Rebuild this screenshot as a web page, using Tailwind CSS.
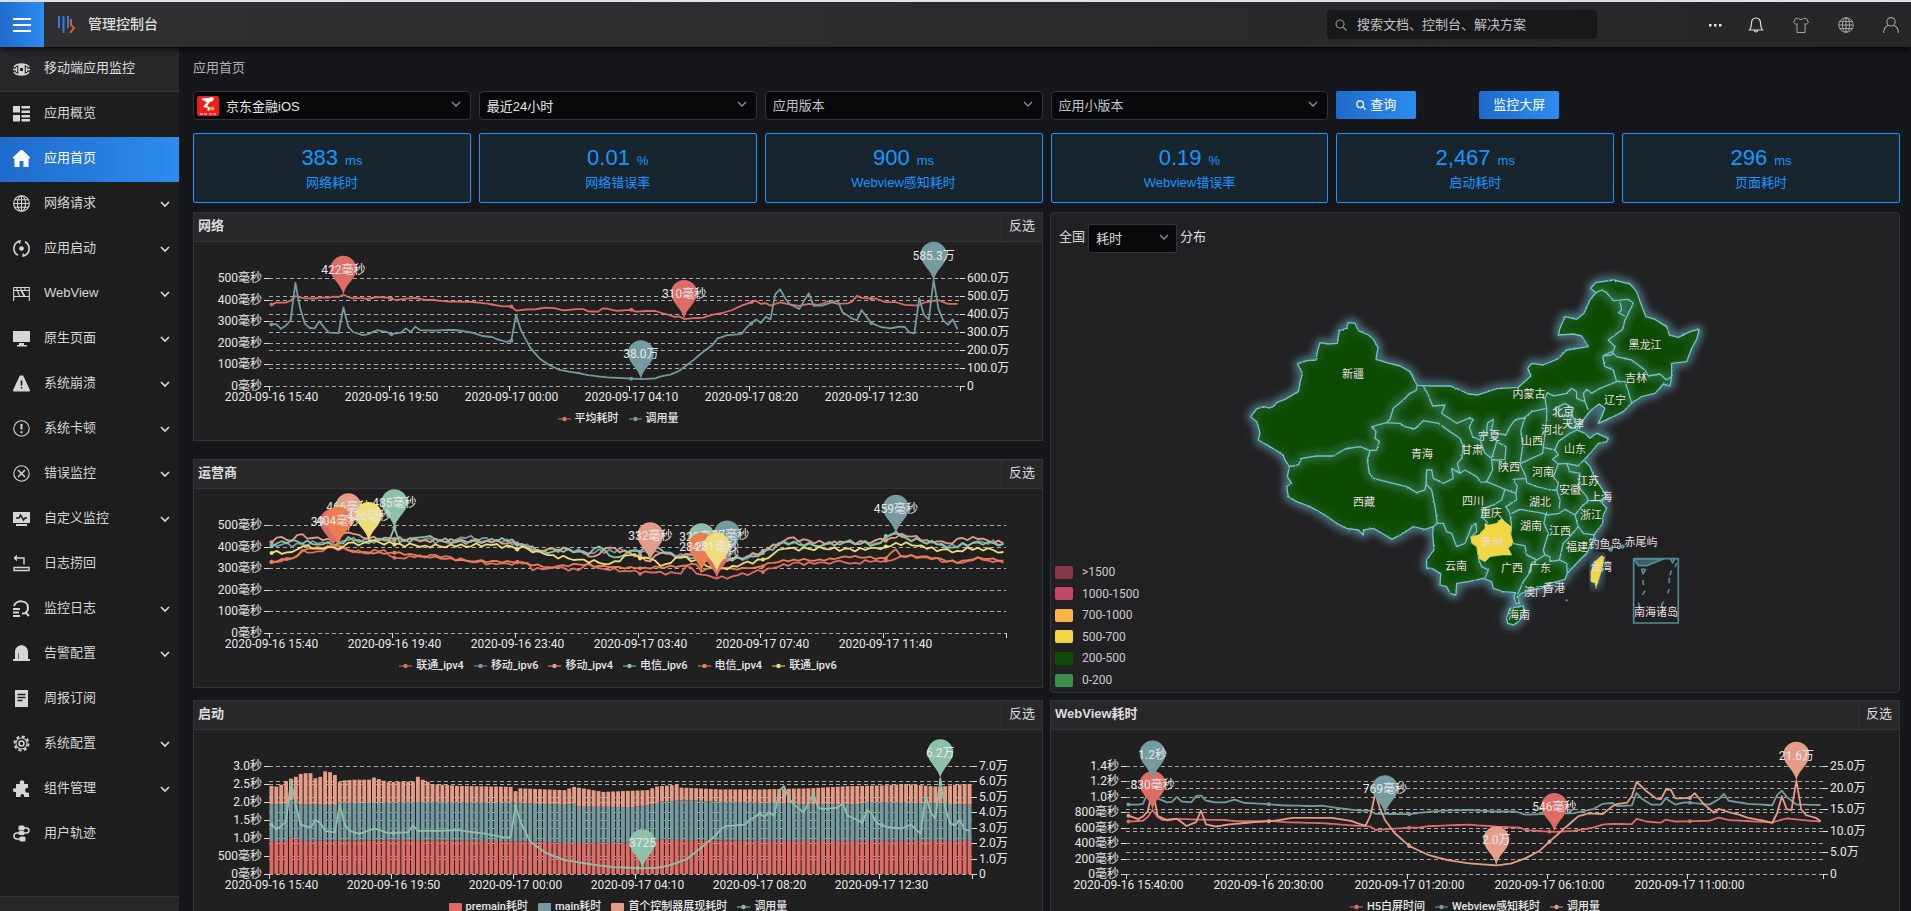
<!DOCTYPE html>
<html lang="zh-CN">
<head>
    <meta charset="UTF-8">
    <meta name="viewport" content="width=device-width, initial-scale=1.0">
    <script src="https://cdn.jsdelivr.net/npm/@tailwindcss/browser@4"></script>
    <title>管理控制台</title>
</head>
<body class="h-screen flex flex-col overflow-hidden bg-[#16171a] border-t-2 border-[#dfe1e5] text-[13px] text-[#dcdcdc] font-['Liberation_Sans','Noto_Sans_CJK_SC',sans-serif]">
    <!-- Header -->
    <header class="relative z-10 h-[45px] shrink-0 flex items-center bg-gradient-to-r from-[#303032] to-[#262628] shadow-md shadow-black/60">
        <button type="button" aria-label="菜单" class="w-11 h-full flex items-center justify-center bg-gradient-to-r from-[#1f6bcb] to-[#2d8cf0]">
            <svg class="w-5 h-4" viewBox="0 0 20 16" fill="none" stroke="#fff" stroke-width="2"><path d="M1 2h18M1 8h18M1 14h18"/></svg>
        </button>
        <svg class="ml-3 w-5 h-5" viewBox="0 0 20 20" fill="none" stroke-width="2"><path stroke="#2d7fdc" d="M3 1v12M7.500 1v17M12 1v12"/><path stroke="#e2582e" d="M15 4v6l3 3-4 5"/></svg>
        <h1 class="ml-3 pb-0.5 text-sm font-medium">管理控制台</h1>
        <label class="ml-auto w-[270px] h-[29px] flex items-center gap-2.5 px-2 rounded-sm bg-[#17181a]">
            <svg class="w-3 h-3" viewBox="0 0 12 12" fill="none" stroke="#8b8b8b" stroke-width="1.2"><circle cx="5" cy="5" r="4"/><path d="M8 8l3.500 3.500"/></svg>
            <input type="text" aria-label="搜索" placeholder="搜索文档、控制台、解决方案" class="flex-1 bg-transparent outline-none placeholder:text-[#c2c2c2]">
        </label>
        <nav class="ml-[110px] mr-3 flex items-center gap-[29px]">
            <button type="button" aria-label="更多" class="-mr-1"><svg class="w-4 h-4" viewBox="0 0 16 16" fill="#e3e3e3"><path d="M2 7h2.500v2.500H2zM7 7h2.500v2.500H7zM12 7h2.500v2.500H12z"/></svg></button>
            <button type="button" aria-label="通知"><svg class="w-4 h-4" viewBox="0 0 16 16" fill="none" stroke="#e0e0e0" stroke-width="1.200"><path d="M8 1c-3 0-4.500 2.200-4.500 5 0 4-.5 5-2 7h13c-1.500-2-2-3-2-7C12.500 3.200 11 1 8 1zM6.500 13.500c0 2 3 2 3 0"/></svg></button>
            <button type="button" aria-label="主题"><svg class="w-4 h-4" viewBox="0 0 16 16" fill="none" stroke="#a3a3a3" stroke-width="1"><path d="M5 1C6 3 10 3 11 1l2.500.8L15.500 5.500 13 7.500l-1-1V15.500H4V6.500l-1 1L.5 5.500l2-3.700z"/></svg></button>
            <button type="button" aria-label="语言"><svg class="w-4 h-4" viewBox="0 0 16 16" fill="none" stroke="#a3a3a3" stroke-width="1"><circle cx="8" cy="8" r="7.300"/><ellipse cx="8" cy="8" rx="3.600" ry="7.300"/><path d="M8 .7v14.600M.7 8h14.600M1.700 4.500h12.600M1.700 11.500h12.600"/></svg></button>
            <button type="button" aria-label="用户"><svg class="w-4 h-4" viewBox="0 0 16 16" fill="none" stroke="#a3a3a3" stroke-width="1.100"><circle cx="8" cy="4.800" r="4.200"/><path d="M.6 16c0-4 2-6.500 4.600-7.400M15.400 16c0-4-2-6.500-4.600-7.400"/></svg></button>
        </nav>
    </header>

    <div class="flex-1 min-h-0 flex">
        <!-- Sidebar -->
        <aside class="w-[179px] shrink-0 flex flex-col bg-[#1d1d1e]">
            <div class="h-[45px] shrink-0 flex items-center gap-3.5 px-[13px] bg-[#28282a] border-b border-[#38383a]">
                <svg class="w-[17px] h-[17px]" viewBox="0 0 17 17" fill="none" stroke="#d6d6d6" stroke-width="1.400"><path d="M1 6c3-4 12-4 15 0M1 11c3 4 12 4 15 0M0 8.500h3M14 8.500h3"/><path fill="#d6d6d6" d="M6 4h5v9H6zM3.500 6v5M13.500 6v5"/><circle cx="8.500" cy="8.500" r="1" fill="#222" stroke="#222"/></svg>
                <span class="pb-0.5">移动端应用监控</span>
            </div>
            <nav id="menu" class="flex-1 flex flex-col"></nav>
            <div class="h-[15px] bg-[#28282a] border-t border-[#38383a]"></div>
        </aside>

        <!-- Content -->
        <main class="flex-1 min-w-0 overflow-y-auto [scrollbar-width:none] pl-3.5 pr-[11px]">
            <div class="h-11 pb-0.5 flex items-center text-[#b2b2b2]">应用首页</div>

            <!-- Filters -->
            <form class="grid grid-cols-6 gap-2">
                <div class="relative">
                    <svg class="absolute left-1 top-[5px] w-[22px] h-5" viewBox="0 0 22 20"><rect width="22" height="20" rx="2" fill="#f01d1d"/><path fill="#fff" d="M4 3c3-2 7 0 10-2l3 1-1 3-3 1-3 4 4 2-2 3-2-1 1-2-5-1 4-5-3-1z"/><circle cx="15.500" cy="12.500" r="2" fill="#ffb52e"/><path stroke="#fff" d="M3 18h3M7 18h3M12 18h3M16 18h3"/></svg>
                    <select aria-label="应用" class="w-full h-[29px] pl-8 pt-0.5 rounded-sm border border-[#333436] bg-[#09090b] text-[#e6e6e6] appearance-none outline-none"><option>京东金融iOS</option></select>
                    <svg class="absolute right-2.5 top-2.5 w-2.5 h-2" viewBox="0 0 10 8" fill="none" stroke="#8d9199" stroke-width="1.300"><path d="M1 1l4 4 4-4"/></svg>
                </div>
                <div class="relative">
                    <select aria-label="时间" class="w-full h-[29px] pl-[7px] pt-0.5 rounded-sm border border-[#333436] bg-[#09090b] text-[#e6e6e6] appearance-none outline-none"><option>最近24小时</option></select>
                    <svg class="absolute right-2.5 top-2.5 w-2.5 h-2" viewBox="0 0 10 8" fill="none" stroke="#8d9199" stroke-width="1.300"><path d="M1 1l4 4 4-4"/></svg>
                </div>
                <div class="relative">
                    <select aria-label="应用版本" class="w-full h-[29px] pl-[7px] rounded-sm border border-[#333436] bg-[#09090b] text-[#bfc3c9] appearance-none outline-none"><option>应用版本</option></select>
                    <svg class="absolute right-2.5 top-2.5 w-2.5 h-2" viewBox="0 0 10 8" fill="none" stroke="#8d9199" stroke-width="1.300"><path d="M1 1l4 4 4-4"/></svg>
                </div>
                <div class="relative">
                    <select aria-label="应用小版本" class="w-full h-[29px] pl-[7px] rounded-sm border border-[#333436] bg-[#09090b] text-[#bfc3c9] appearance-none outline-none"><option>应用小版本</option></select>
                    <svg class="absolute right-2.5 top-2.5 w-2.5 h-2" viewBox="0 0 10 8" fill="none" stroke="#8d9199" stroke-width="1.300"><path d="M1 1l4 4 4-4"/></svg>
                </div>
                <div class="flex gap-[63px]">
                    <button type="button" class="w-20 h-7 flex items-center justify-center gap-1 rounded-xs text-white bg-gradient-to-r from-[#1f6bcb] to-[#2d8cf0]">
                        <svg class="w-2.5 h-2.5" viewBox="0 0 12 12" fill="none" stroke="#fff" stroke-width="1.500"><circle cx="5" cy="5" r="4"/><path d="M8 8l3.500 3.500"/></svg>查询
                    </button>
                    <button type="button" class="w-20 h-7 rounded-xs text-white bg-gradient-to-r from-[#1f6bcb] to-[#2d8cf0]">监控大屏</button>
                </div>
            </form>

            <!-- Key figures -->
            <div id="cards" class="mt-[13px] grid grid-cols-6 gap-2"></div>

            <!-- Panels -->
            <div class="mt-[9px] grid grid-cols-2 gap-x-[7px] gap-y-[7px]">
                <div class="flex flex-col gap-[18px]">
                    <section class="h-[229px] flex flex-col border border-[#333435] bg-[#202020]">
                        <div class="h-[29px] shrink-0 flex items-center bg-[#28282a] border-b border-[#333435]">
                            <h2 class="flex-1 pl-1 pb-0.5 font-bold">网络</h2>
                            <button type="button" class="w-[41px] h-full pb-0.5 border-l border-[#333435]">反选</button>
                        </div>
                        <div id="chart-net" class="flex-1"></div>
                    </section>
                    <section class="h-[229px] flex flex-col border border-[#333435] bg-[#202020]">
                        <div class="h-[29px] shrink-0 flex items-center bg-[#28282a] border-b border-[#333435]">
                            <h2 class="flex-1 pl-1 pb-0.5 font-bold">运营商</h2>
                            <button type="button" class="w-[41px] h-full pb-0.5 border-l border-[#333435]">反选</button>
                        </div>
                        <div id="chart-isp" class="flex-1"></div>
                    </section>
                </div>

                <section class="h-[481px] flex flex-col border border-[#333435] rounded bg-[#212123]">
                    <div class="mt-[11px] ml-2 flex items-center gap-[3px]">
                        <label for="metric" class="pb-1">全国</label>
                        <div class="relative">
                            <select id="metric" class="w-[89px] h-[29px] pl-[7px] rounded-xs border border-[#333436] bg-[#09090b] appearance-none outline-none"><option>耗时</option></select>
                            <svg class="absolute right-2 top-2.5 w-2.5 h-2" viewBox="0 0 10 8" fill="none" stroke="#8d9199" stroke-width="1.300"><path d="M1 1l4 4 4-4"/></svg>
                        </div>
                        <span class="pb-1">分布</span>
                    </div>
                    <div class="flex-1 min-h-0 flex items-end">
                        <ul class="w-[96px] shrink-0 ml-1 text-xs font-['Roboto',sans-serif] text-[#ccc] pb-[1px]">
                            <li class="h-[22px] flex items-center gap-[9px]"><i class="w-[18px] h-[13px] rounded-xs bg-[#8a3548]"></i>&gt;1500</li>
                            <li class="h-[21px] flex items-center gap-[9px]"><i class="w-[18px] h-[13px] rounded-xs bg-[#c24866]"></i>1000-1500</li>
                            <li class="h-[22px] flex items-center gap-[9px]"><i class="w-[18px] h-[13px] rounded-xs bg-[#ffb24a]"></i>700-1000</li>
                            <li class="h-[21px] flex items-center gap-[9px]"><i class="w-[18px] h-[13px] rounded-xs bg-[#f2d643]"></i>500-700</li>
                            <li class="h-[22px] flex items-center gap-[9px]"><i class="w-[18px] h-[13px] rounded-xs bg-[#0f4c05]"></i>200-500</li>
                            <li class="h-[22px] flex items-center gap-[9px]"><i class="w-[18px] h-[13px] rounded-xs bg-[#3b8f4a]"></i>0-200</li>
                        </ul>
                        <div class="flex-1 flex justify-center pr-[110px] mb-[52px]">
                            <svg class="w-[480px] h-[380px] overflow-visible" viewBox="0 0 480 380">
                                <defs>
                                    <filter id="blur" x="-10%" y="-10%" width="120%" height="120%"><feGaussianBlur stdDeviation="12"/></filter>
                                    <filter id="rough" x="-5%" y="-5%" width="110%" height="110%"><feTurbulence type="fractalNoise" baseFrequency=".2" numOctaves="2" seed="4"/><feDisplacementMap in="SourceGraphic" scale="6" xChannelSelector="R" yChannelSelector="G"/></filter>
                                    <path id="land" d="M62 470L80 447 100 440 118 444 130 440 140 428 165 418 205 395 212 360 217 340 203 312 230 302 258 300 262 275 270 248 295 252 322 250 328 212 350 205 355 188 375 190 385 212 415 225 430 238 444 262 438 298 470 308 510 318 540 335 555 365 562 376 600 378 660 378 690 390 715 402 745 405 800 386 865 382 903 348 893 325 905 310 940 315 985 296 1010 270 1075 260 1055 228 1030 222 985 225 990 205 1005 170 1040 178 1062 160 1080 120 1098 98 1082 85 1098 68 1150 60 1200 72 1220 95 1232 130 1248 170 1275 178 1310 200 1318 225 1345 232 1380 215 1408 208 1400 238 1385 265 1370 305 1325 310 1325 350 1320 378 1300 372 1275 400 1235 410 1205 430 1180 455 1150 470 1105 490 1115 470 1125 445 1108 432 1090 445 1075 460 1060 480 1045 495 1040 510 1065 520 1080 535 1100 520 1135 535 1130 545 1105 550 1085 575 1062 600 1080 620 1093 650 1108 675 1122 695 1130 710 1110 722 1130 745 1120 765 1118 790 1095 820 1085 850 1070 880 1040 910 1012 940 1005 958 960 970 935 985 900 990 875 1000 862 1010 868 1030 858 1030 852 1010 857 998 820 995 790 985 785 965 760 955 715 965 680 970 678 1005 660 1000 650 980 630 975 632 940 605 925 590 925 590 900 612 870 608 820 610 800 585 808 550 800 520 820 485 838 465 825 430 805 400 810 400 825 385 810 350 805 320 790 285 765 240 740 200 725 175 710 170 680 185 670 172 650 178 620 165 600 160 585 120 560 85 540 90 520 85 500 80 485ZM830 1075L840 1045 880 1038 882 1060 865 1085 850 1095 833 1090Z"/>
                                    <path id="borders" d="M178 620L205 615 215 595 260 588 310 588 345 567 390 560 420 572 440 570 448 545 435 535 438 515 425 500 470 488 480 478 490 445 520 420 540 400 558 392 562 376
                                        M420 572L412 600 418 640 430 655 480 668 530 680 560 698 585 690 588 672 605 690 615 740 622 790 610 800
                                        M470 488L510 490 525 500 555 507 580 482 625 490 660 515 690 535 700 560 695 595 682 610 690 640 665 625 670 655 640 670 610 655 605 630 590 630 588 672
                                        M580 378L595 405 608 438 645 435 635 460 680 490 715 475 730 478 718 500 728 530 750 540 757 520 770 525 772 490 790 478 785 510 800 520 828 525 840 500 855 480 885 472 905 455 950 445 945 415 952 398 970 408 1010 400 1025 385 1040 395 1040 415 1065 425 1060 400 1070 388 1085 400 1110 385 1160 365 1150 330 1125 320 1118 288 1145 285 1155 260 1135 240 1178 208 1185 180 1193 165 1210 130 1195 118 1150 122 1130 98 1115 90 1098 98
                                        M1170 125L1175 150 1165 158 1185 168 M750 540L765 580 785 595 793 570 800 545 828 560 825 598 800 600 785 598 788 630 770 665 825 688 858 700 862 680 850 658 888 655
                                        M885 472L873 510 878 560 870 612 905 595 938 580 940 562 945 520 950 480 950 445 M1065 425L1075 450
                                        M1160 365L1185 365 1195 395 1205 430 M1118 288L1145 275 1160 290 1205 300 1245 330 1255 348 1290 342 1310 360 1325 350
                                        M940 562L975 570 985 545 1020 520 1040 510 M975 570L985 585 968 598 985 612 1010 610 1045 618 1062 600
                                        M975 445L1005 430 1030 445 1025 465 990 470ZM1025 465L1040 490 1035 505 1015 500Z
                                        M870 612L888 650 890 668 920 680 960 690 980 690 985 670 970 650 985 612 M1010 610L1020 635 1050 640 1045 680 1070 710 1075 722
                                        M980 690L990 720 988 745 M690 640L705 630 740 650 755 668 770 665 M825 688L815 720 790 735 760 745 755 770 775 790
                                        M858 700L860 720 828 740 840 760 845 800 M622 790L640 790 650 815 665 820 680 860 705 850 725 800 738 790 740 815 725 830
                                        M845 760L870 748 940 760 950 765 988 760 1005 748 1035 765 1055 740 1075 722 1110 722 M950 755L942 790 955 820 940 870 945 885
                                        M850 850L885 858 890 885 920 900 945 885 960 890 960 905 988 900 1010 910 1012 940 M1035 765L1045 800 1020 830 1000 850 988 900
                                        M1045 800L1060 820 1095 825 M920 900L905 910 895 945 880 965 862 1005 M745 895L755 920 775 930 765 955"/>
                                    <clipPath id="inland"><use href="#land"/></clipPath>
                                </defs>
                                <g transform="scale(.3333)" stroke-linejoin="round">
                                    <use href="#land" fill="none" stroke="#6fb7cc" stroke-width="18" opacity=".8" filter="url(#blur)"/>
                                    <path d="M1083 935L1095 905 1115 887 1122 892 1115 930 1098 985Z" stroke="#6fb7cc" stroke-width="14" opacity=".6" filter="url(#blur)"/>
                                    <g filter="url(#rough)">
                                        <use href="#land" fill="#0f4c05"/>
                                        <g clip-path="url(#inland)" fill="none">
                                            <use href="#land" stroke="#6fb7cc" stroke-width="8" opacity=".3" filter="url(#blur)"/>
                                            <use href="#borders" stroke="#6fb7cc" stroke-width="14" opacity=".55" filter="url(#blur)"/>
                                        </g>
                                        <path fill="#f2d643" stroke="#b9d98c" stroke-width="2" d="M765 790L775 795 800 790 815 775 830 790 845 800 843 825 850 850 835 865 845 885 815 885 780 890 765 905 745 895 740 860 725 850 722 830 745 825 765 805Z"/>
                                        <g fill="none" stroke="#74c2c6" stroke-width="4"><use href="#land"/><use href="#borders"/></g>
                                        <path fill="#f2d643" stroke="#b9d98c" stroke-width="2" d="M1083 935L1095 905 1115 887 1122 892 1115 930 1098 985 1095 968 1083 965Z"/>
                                    </g>
                                    <g fill="#4d93a0" stroke="#5fa3ae" stroke-width="3"><circle cx="1142" cy="868" r="6"/><circle cx="1178" cy="860" r="5"/><circle cx="1010" cy="1021" r="2"/></g>
                                    <g fill="none" stroke="#4f8d98" stroke-width="5">
                                        <path fill="#3d5c66" d="M1212 897L1300 897 1250 917 1225 917Z"/>
                                        <path d="M1211 896h134v193h-134zM1322 897l6 12 6-12M1340 910l-5 12M1324 932l-4 14M1318 953v17M1318 988l-5 12M1300 1025l-8 18M1225 1028l4 14M1246 992l-9 12M1238 960l3 15M1235 928h12l-8 14z"/>
                                    </g>
                                </g>
                                <g id="provinces" class="text-[11px] fill-[#e8dfe2] font-['Noto_Sans_CJK_SC',sans-serif]" text-anchor="middle"></g>
                            </svg>
                        </div>
                    </div>
                </section>

                <section class="h-[229px] flex flex-col border border-[#333435] bg-[#202020]">
                    <div class="h-[29px] shrink-0 flex items-center bg-[#28282a] border-b border-[#333435]">
                        <h2 class="flex-1 pl-1 pb-0.5 font-bold">启动</h2>
                        <button type="button" class="w-[41px] h-full pb-0.5 border-l border-[#333435]">反选</button>
                    </div>
                    <div id="chart-launch" class="flex-1"></div>
                </section>
                <section class="h-[229px] flex flex-col border border-[#333435] bg-[#202020]">
                    <div class="h-[29px] shrink-0 flex items-center bg-[#28282a] border-b border-[#333435]">
                        <h2 class="flex-1 pl-1 pb-0.5 font-bold">WebView耗时</h2>
                        <button type="button" class="w-[41px] h-full pb-0.5 border-l border-[#333435]">反选</button>
                    </div>
                    <div id="chart-webview" class="flex-1"></div>
                </section>
            </div>
        </main>
    </div>

    <script>
        // Sidebar entries: name, has submenu, icon (17x17)
        const menu = [
            ['应用概览', false, '<path fill="currentColor" stroke="none" d="M0 1h7v6.500H0zM0 10h7v6.500H0zM8.500 1H17v2.500H8.500zM8.500 5.500H17V8H8.500zM8.500 10H17v2.500H8.500zM8.500 14H17v2.500H8.500z"/>'],
            ['应用首页', false, '<path fill="currentColor" d="M8.500 0L17 8h-2v8.500h-4V11c0-1-5-1-5 0v5.500H2V8H0z"/>'],
            ['网络请求', true, '<circle cx="8.500" cy="8.500" r="7.800"/><ellipse cx="8.500" cy="8.500" rx="4" ry="7.800"/><path d="M8.500.7v15.600M.7 8.500h15.600M2 4.800h13M2 12.200h13"/>'],
            ['应用启动', true, '<path stroke-width="1.600" d="M6 1.300A7.600 7.600 0 0 0 5 15.200M11 15.700A7.600 7.600 0 0 0 12 1.800"/><path fill="currentColor" stroke="none" d="M4 1l4-1-1 4zM13 16l-4 1 1-4z"/><circle cx="8.500" cy="8.500" r="1.800" fill="currentColor"/>'],
            ['WebView', true, '<path d="M.7 16V2.500h15.600V16M.7 5.500h15.600M.7 11.500h15.600M4 2.500v3l2 3M8 2.500v3l3 6M12 2.500v3M5 8l2 3.500M9 6l3 5.500"/>'],
            ['原生页面', true, '<path fill="currentColor" stroke="none" d="M0 1h17v11H0zM6 13h5v2h3v1.500H4V15h2z"/>'],
            ['系统崩溃', true, '<path fill="currentColor" stroke-width="2" stroke-linejoin="round" d="M7.500 1.500h2L16 15.500H1z"/><path stroke="#1d1d1e" stroke-width="1.600" d="M8.500 5.500v5M8.500 12v1.600"/>'],
            ['系统卡顿', true, '<circle cx="8.500" cy="8.500" r="7.700"/><path stroke-width="2" d="M8.500 4v5.500M8.500 11.200v2"/>'],
            ['错误监控', true, '<circle cx="8.500" cy="8.500" r="7.700"/><path stroke-width="1.500" d="M5 5l7 7M12 5l-7 7"/>'],
            ['自定义监控', true, '<path fill="currentColor" stroke="none" d="M0 2h17v11H0zM3 14h11v2H3z"/><path stroke="#1d1d1e" stroke-width="1.500" d="M3 8h3l1.500-3 3 5 1.500-2h2"/>'],
            ['日志捞回', false, '<path stroke-width="1.400" d="M4 .5L1.500 3 4 5.500M2 3h9v6.500M1 12.500h15v3H1z"/>'],
            ['监控日志', true, '<path stroke-width="2" d="M1 6C3-.5 15-.5 15 8c0 4-3 6-6 5.500M12 12l4 4M0 9h7M0 12.500h6M0 16h7"/>'],
            ['告警配置', true, '<path fill="currentColor" stroke="none" d="M2 14V7c0-9 13-9 13 0v7h2v2H0v-2z"/><path stroke="#777" d="M5.500 8v6"/>'],
            ['周报订阅', false, '<path fill="currentColor" stroke="none" d="M2 0h13v17H2z"/><path stroke="#1d1d1e" stroke-width="1.400" d="M4.500 4.500h8M4.500 7.500h8M4.500 10.500h5"/>'],
            ['系统配置', true, '<circle cx="8.500" cy="8.500" r="7" stroke-width="2" stroke-dasharray="3 2.500"/><circle cx="8.500" cy="8.500" r="5.500"/><circle cx="8.500" cy="8.500" r="2.500" stroke-width="1.500"/>'],
            ['组件管理', true, '<path fill="currentColor" stroke="none" d="M3 4h4c-2-5 6-5 4 0h4v4c-4-1-4 6 1 4.500V17h-5c1-4-4-4-3.500 0H3v-5c-5 1-4-5 0-3.500z"/>'],
            ['用户轨迹', false, '<path stroke-width="1.500" d="M6 3h7c4 0 4 5 0 5h-2M6 8H4c-4 0-4 6 0 6h3"/><rect x="6" y="1" width="5" height="4" rx="1" fill="currentColor"/><rect x="6" y="6.500" width="5" height="3" rx="1" fill="currentColor"/><rect x="7" y="12" width="5" height="4" rx="1" fill="currentColor"/>']
        ];
        document.getElementById('menu').innerHTML = menu.map(([name, sub, icon]) => `
            <a href="#" class="h-[45px] pb-0.5 flex items-center gap-3.5 px-[13px] ${name === '应用首页' ? 'bg-gradient-to-r from-[#1f6bcb] to-[#2d8cf0] text-white' : 'text-[#d6d6d6]'}">
                <svg class="w-[17px] h-[17px] shrink-0" viewBox="0 0 17 17" fill="none" stroke="currentColor" stroke-width="1.100">${icon}</svg>
                <span class="flex-1 pb-0.5">${name}</span>
                ${sub ? '<svg class="w-2.5 h-2 -mr-1" viewBox="0 0 10 8" fill="none" stroke="currentColor" stroke-width="1.700"><path d="M1 2l4 4 4-4"/></svg>' : ''}
            </a>`).join('');

        const cards = [['383', 'ms', '网络耗时'], ['0.01', '%', '网络错误率'], ['900', 'ms', 'Webview感知耗时'], ['0.19', '%', 'Webview错误率'], ['2,467', 'ms', '启动耗时'], ['296', 'ms', '页面耗时']];
        document.getElementById('cards').innerHTML = cards.map(([value, unit, name]) => `
            <div class="h-[70px] pt-0.5 flex flex-col items-center justify-center rounded-xs border border-[#1398ff] bg-[#18242e] text-[#1398ff]">
                <div class="flex items-baseline gap-[7px]"><span class="text-[22px] leading-7">${value}</span><span>${unit}</span></div>
                <div class="leading-[22px]">${name}</div>
            </div>`).join('');

        const provinces = [['新疆', 123, 114], ['黑龙江', 415, 85], ['吉林', 406, 118], ['辽宁', 385, 140], ['内蒙古', 299, 134], ['北京', 333, 152], ['天津', 343, 164], ['河北', 322, 170], ['山西', 302, 181], ['山东', 345, 189], ['宁夏', 259, 176], ['甘肃', 242, 190], ['青海', 192, 194], ['陕西', 279, 207], ['河南', 313, 212], ['江苏', 358, 221], ['安徽', 340, 230], ['上海', 371, 237], ['西藏', 134, 242], ['四川', 243, 241], ['重庆', 261, 253], ['湖北', 310, 242], ['浙江', 361, 255], ['湖南', 301, 266], ['江西', 330, 271], ['贵州', 262, 282], ['福建', 347, 287], ['钓鱼岛', 375, 284], ['赤尾屿', 411, 282], ['云南', 226, 306], ['广西', 282, 308], ['广东', 310, 308], ['台湾', 371, 307], ['香港', 324, 328], ['澳门', 305, 332], ['海南', 289, 355], ['南海诸岛', 426, 352]];
        document.getElementById('provinces').innerHTML = provinces.map(([name, x, y]) => `<text x="${x}" y="${y + 4}">${name}</text>`).join('');

        const RED = '#dd6b66', BLUE = '#759aa0', SALMON = '#e69d87', GREEN = '#8dc1a9', ORANGE = '#ea7e53', YELLOW = '#eedd78';
        const POINTS = 144, TOP = 36, HEIGHT = 108, LEFT = 75;

        // "index:value" samples, filled in linearly; wobble adds a repeatable jitter between the samples
        function expand(text, wobble = 0) {
            const keys = text.split(' ').map(p => p.split(':').map(Number));
            const out = [];
            for (let i = 0, k = 0; i < POINTS; i++) {
                while (k < keys.length - 2 && keys[k + 1][0] <= i) k++;
                const [i0, v0] = keys[k], [i1, v1] = keys[k + 1];
                const exact = keys.some(p => p[0] === i);
                const noise = exact ? 0 : Math.sin(i * 2.3 + v0) * wobble;
                out.push(v0 + (v1 - v0) * (i - i0) / (i1 - i0) + noise);
            }
            return out;
        }

        function draw(id, cfg) {
            const el = document.getElementById(id);
            const w = el.clientWidth - LEFT - cfg.right, bottom = TOP + HEIGHT, band = w / POINTS;
            if (w <= 0) return;
            const px = i => LEFT + (i + 0.5) * band;
            const py = (v, max) => bottom - v / max * HEIGHT;
            let s = '';
            const axis = (labels, x, tick, anchor, tx) => labels.forEach((label, i) => {
                const y = Math.round(bottom - i * HEIGHT / (labels.length - 1)) + 0.5;
                s += `<path d="M${LEFT} ${y}h${w}" stroke="#aaa" stroke-dasharray="4 3"/><path d="M${x} ${y}h${tick}" stroke="#ddd"/>
                    <text x="${tx}" y="${y + 3}" text-anchor="${anchor}">${label}</text>`;
            });
            axis(cfg.left, LEFT, -5, 'end', LEFT - 7);
            if (cfg.rightLabels) axis(cfg.rightLabels, LEFT + w, 5, 'start', LEFT + w + 7);
            cfg.times.forEach((label, i) => {
                const x = Math.round(LEFT + i * cfg.step * band) + 0.5;
                s += `<path d="M${x} ${bottom}v5" stroke="#ddd"/><text x="${x + 2}" y="${bottom + 15}" text-anchor="middle">${label}</text>`;
            });
            s += `<path d="M${Math.round(LEFT + w) + 0.5} ${bottom}v5" stroke="#ddd"/>`;

            // stacked bars
            let base = new Array(POINTS).fill(0);
            cfg.series.filter(d => d.bar).forEach(d => {
                const top = expand(d.data);
                top.forEach((v, i) => {
                    const y = py(v, d.max);
                    s += `<rect x="${LEFT + i * band + 0.5}" y="${y}" width="${band - 1}" height="${py(base[i], d.max) - y}" fill="${d.color}"/>`;
                });
                base = top;
            });
            const lines = cfg.series.filter(d => !d.bar);
            lines.forEach(d => {
                const v = expand(d.data, d.wobble);
                s += `<polyline points="${v.map((n, i) => px(i).toFixed(1) + ',' + py(n, d.max).toFixed(1)).join(' ')}" fill="none" stroke="${d.color}" stroke-width="1.800" stroke-linejoin="round"/>`;
                for (let i = 0; i < POINTS; i += cfg.step) s += `<circle cx="${px(i)}" cy="${py(v[i], d.max)}" r="2" fill="${d.color}"/>`;
            });
            lines.forEach(d => d.pins.forEach(([i, v, label]) => {
                const x = px(i), y = py(v, d.max);
                s += `<path d="M${x} ${y}C${x - 2} ${y - 11} ${x - 13} ${y - 16} ${x - 13} ${y - 26}A13 13 0 0 1 ${x + 13} ${y - 26}C${x + 13} ${y - 16} ${x + 2} ${y - 11} ${x} ${y}z" fill="${d.color}"/>
                    <text x="${x}" y="${y - 21}" text-anchor="middle">${label}</text>`;
            }));
            const legend = cfg.series.map(d => `<li class="flex items-center gap-1">
                <svg class="w-[13px] h-2.5" viewBox="0 0 13 10">${d.bar ? `<rect y="1" width="13" height="8" rx="1" fill="${d.color}"/>` : `<path d="M0 5h13" stroke="${d.color}"/><circle cx="6.500" cy="5" r="2.200" fill="${d.color}"/>`}</svg>${d.name}</li>`).join('');
            el.innerHTML = `<svg class="block w-full h-[168px] overflow-visible text-xs fill-[#e8e8e8] font-['Roboto','Noto_Sans_CJK_SC',sans-serif]">${s}</svg>
                <ul class="h-[18px] flex items-center justify-center gap-2.5 text-[11px] font-medium text-[#e8e8e8] font-['Roboto','Noto_Sans_CJK_SC',sans-serif]">${legend}</ul>`;
        }

        const msAxis = ['0毫秒', '100毫秒', '200毫秒', '300毫秒', '400毫秒', '500毫秒'];

        const charts = {
            'chart-net': {
                right: 82, step: 25, left: msAxis,
                rightLabels: ['0', '100.0万', '200.0万', '300.0万', '400.0万', '500.0万', '600.0万'],
                times: ['2020-09-16 15:40', '2020-09-16 19:50', '2020-09-17 00:00', '2020-09-17 04:10', '2020-09-17 08:20', '2020-09-17 12:30'],
                series: [
                    { name: '平均耗时', color: RED, max: 500, pins: [[15, 422, '422毫秒'], [86, 310, '310毫秒']], data: '0:377 1:386 3:386 4:395 5:416 6:410 7:406 9:405 10:409 12:409 13:414 14:412 15:422 16:412 17:406 19:407 20:403 22:412 24:409 26:398 28:404 30:408 32:398 34:398 35:394 37:391 42:389 45:381 48:370 50:368 51:349 53:354 55:355 57:363 59:360 61:350 63:355 65:356 66:346 68:344 69:359 70:358 72:348 75:353 76:344 78:347 80:347 82:334 83:328 84:320 85:322 86:310 88:314 90:316 92:330 94:338 96:352 98:372 100:388 101:394 102:380 103:384 104:372 106:387 108:378 110:371 112:380 114:376 115:382 116:392 118:380 120:383 121:390 122:417 123:408 124:407 125:404 126:404 128:388 130:388 132:376 135:372 136:386 137:390 139:398 140:388 141:380 143:380' },
                    { name: '调用量', color: BLUE, max: 600, pins: [[77, 38, '38.0万'], [138, 585.3, '585.3万']], data: '0:342 1:344 2:318 3:335 4:365 5:572 6:430 7:345 8:322 9:320 10:360 11:325 12:296 14:294 15:437 16:330 17:300 19:283 20:287 22:310 24:300 25:288 27:296 28:320 29:300 30:330 31:310 34:308 38:312 40:305 42:295 44:278 46:272 47:260 49:245 50:252 51:395 52:310 54:210 56:150 58:115 60:90 62:80 64:72 66:60 70:48 74:42 77:38 80:42 81:52 83:62 85:85 86:105 88:145 90:190 92:230 93:265 95:282 98:290 99:325 101:370 102:350 103:385 104:370 105:510 106:537 107:490 108:455 110:428 112:515 113:445 115:448 118:475 119:410 121:375 122:365 123:422 125:350 127:328 129:320 131:330 132:328 133:298 134:292 135:488 136:395 137:370 138:590 139:430 140:365 141:340 142:370 143:315' }
                ]
            },
            'chart-isp': {
                right: 36, step: 24, left: msAxis,
                times: ['2020-09-16 15:40', '2020-09-16 19:40', '2020-09-16 23:40', '2020-09-17 03:40', '2020-09-17 07:40', '2020-09-17 11:40'],
                series: [
                    { name: '联通_ipv4', color: RED, max: 500, wobble: 8, pins: [[12, 396, '396毫秒'], [87, 252, '252毫秒']], data: '0:328 4:345 6:385 8:372 12:396 18:370 22:385 24:348 28:350 32:362 38:335 44:318 50:325 51:290 55:305 60:290 62:325 64:300 70:285 74:280 80:275 81:310 84:270 87:252 90:262 94:280 98:300 102:325 106:320 110:330 114:325 118:335 120:335 124:355 128:350 132:330 135:325 138:350 140:335 143:325' },
                    { name: '移动_ipv6', color: BLUE, max: 500, wobble: 12, pins: [[89, 340, '337毫秒'], [122, 459, '459毫秒']], data: '0:410 6:410 10:420 15:430 22:428 28:440 34:420 38:440 44:430 48:415 52:385 58:385 62:370 66:385 72:375 76:370 80:365 84:360 89:345 93:345 97:385 100:425 106:405 112:420 118:415 122:459 124:440 130:412 134:395 138:425 143:412' },
                    { name: '移动_ipv4', color: SALMON, max: 500, wobble: 9, pins: [[15, 466, '466毫秒'], [74, 332, '332毫秒']], data: '0:420 2:445 4:425 5:453 8:440 10:430 13:440 15:466 18:440 24:435 30:430 36:425 42:428 48:410 52:385 58:390 63:355 66:395 70:370 74:332 76:370 80:355 84:370 88:340 92:345 96:380 100:425 101:440 108:415 116:420 121:440 123:460 128:430 132:415 135:440 138:435 143:415' },
                    { name: '电信_ipv6', color: GREEN, max: 500, wobble: 10, pins: [[24, 485, '485毫秒'], [84, 328, '328毫秒']], data: '0:400 2:425 5:425 10:410 14:415 15:445 18:420 20:430 23:430 24:488 25:420 30:445 36:420 42:425 45:440 50:400 54:370 58:390 62:365 64:400 67:350 71:380 75:400 79:350 82:345 84:338 88:345 92:340 96:370 100:420 106:405 112:420 118:410 122:470 124:440 130:410 132:395 138:420 143:412' },
                    { name: '电信_ipv4', color: ORANGE, max: 500, wobble: 5, pins: [[13, 404, '404毫秒'], [84, 284, '284毫秒']], data: '0:330 4:345 7:390 13:404 16:380 20:368 24:372 30:355 38:335 48:328 54:305 60:318 66:305 72:300 80:310 83:318 84:284 86:300 90:298 94:300 98:325 102:340 108:335 112:355 120:345 122:388 123:355 128:355 134:325 138:350 143:335' },
                    { name: '联通_ipv6', color: YELLOW, max: 500, wobble: 9, pins: [[19, 426, '426毫秒'], [87, 284, '281毫秒']], data: '0:370 4:375 6:400 10:390 14:400 16:420 17:405 19:426 24:410 30:405 36:400 42:410 50:390 54:360 60:340 66:320 70:360 74:345 76:310 80:350 84:330 87:290 90:310 96:340 100:390 108:390 116:385 120:400 124:420 128:390 134:380 138:395 143:375' }
                ]
            },
            'chart-launch': {
                right: 70, step: 25, left: ['0毫秒', '500毫秒', '1.0秒', '1.5秒', '2.0秒', '2.5秒', '3.0秒'],
                rightLabels: ['0', '1.0万', '2.0万', '3.0万', '4.0万', '5.0万', '6.0万', '7.0万'],
                times: ['2020-09-16 15:40', '2020-09-16 19:50', '2020-09-17 00:00', '2020-09-17 04:10', '2020-09-17 08:20', '2020-09-17 12:30'],
                series: [
                    { name: 'premain耗时', color: RED, bar: true, max: 3, data: '0:.91 3:.92 4:1.02 6:.92 20:.93 30:.94 55:.9 60:.86 77:.87 80:.95 100:.92 143:.92' },
                    { name: 'main耗时', color: BLUE, bar: true, max: 3, data: '0:1.93 3:1.95 4:2.05 5:2 6:1.93 13:1.92 14:1.98 20:1.97 30:2 45:1.98 51:1.98 54:1.95 60:1.92 62:1.95 63:1.87 74:1.86 78:1.93 80:2.02 86:2.05 92:2 105:1.97 110:1.93 120:1.93 122:2 130:1.98 143:1.93' },
                    { name: '首个控制器展现耗时', color: SALMON, bar: true, max: 3, data: '0:2.45 1:2.43 2:2.48 3:2.58 4:2.65 5:2.7 6:2.78 7:2.8 8:2.8 9:2.66 10:2.7 11:2.85 12:2.83 13:2.75 14:2.55 15:2.6 17:2.62 20:2.62 21:2.68 24:2.55 29:2.57 30:2.7 31:2.62 33:2.5 38:2.45 49:2.42 50:2.3 51:2.38 60:2.33 62:2.42 68:2.28 77:2.33 79:2.43 83:2.48 84:2.4 92:2.35 100:2.35 110:2.38 118:2.44 125:2.46 130:2.5 137:2.42 140:2.48 143:2.5' },
                    { name: '调用量', color: GREEN, max: 7, pins: [[76, 0.3725, '3725'], [137, 6.2, '6.2万']], data: '0:3.2 1:2.9 2:3.1 3:3.4 4:6.1 5:4.4 6:3.2 8:3 9:3.5 10:3.3 11:2.8 13:2.7 14:4.5 15:3.2 16:2.8 18:2.6 21:2.95 24:2.65 28:2.7 29:3.15 30:2.8 35:2.8 38:2.85 44:2.6 48:2.35 49:2.4 50:4.4 51:3.4 53:2.1 56:1.4 60:.9 64:.7 66:.6 70:.45 76:.37 79:.4 82:.6 85:.95 88:1.7 91:2.5 92:2.9 93:3.1 97:3.2 98:3.5 100:3.9 101:3.7 102:4 103:3.75 104:5.4 105:5.7 106:4.9 107:4.5 109:4 111:5.2 112:4.3 113:4.2 116:4.3 117:4.6 118:3.8 120:3.5 121:3.3 122:4.15 123:3.9 124:3.3 126:3.05 129:2.95 131:3.2 133:2.6 134:5.1 135:4 136:3.6 137:6.2 138:4.3 139:3.3 140:3.15 141:3.5 142:2.9 143:2.8' }
                ]
            },
            'chart-webview': {
                right: 76, step: 29, left: ['0毫秒', '200毫秒', '400毫秒', '600毫秒', '800毫秒', '1.0秒', '1.2秒', '1.4秒'],
                rightLabels: ['0', '5.0万', '10.0万', '15.0万', '20.0万', '25.0万'],
                times: ['2020-09-16 15:40:00', '2020-09-16 20:30:00', '2020-09-17 01:20:00', '2020-09-17 06:10:00', '2020-09-17 11:00:00'],
                series: [
                    { name: 'H5白屏时间', color: RED, max: 1400, pins: [[5, 830, '830毫秒'], [88, 546, '546毫秒']], data: '0:680 3:690 4:740 5:830 6:740 7:700 9:715 15:705 20:700 22:685 30:685 33:670 40:660 44:640 50:615 51:570 53:580 58:600 60:600 62:620 70:640 76:615 81:600 82:570 88:546 92:560 96:600 98:640 100:650 104:645 105:715 107:680 110:665 111:705 113:680 120:690 122:730 124:700 130:680 133:670 136:720 140:695 143:680' },
                    { name: 'Webview感知耗时', color: BLUE, max: 1400, pins: [[5, 1224, '1.2秒'], [53, 775, '769毫秒']], data: '0:900 2:900 3:910 4:1050 5:1200 6:980 8:930 9:935 10:1000 11:940 13:930 14:1010 15:1020 16:950 18:930 20:930 22:965 24:920 28:910 32:890 38:880 40:885 44:850 48:820 50:820 51:780 58:775 61:800 65:820 70:830 76:810 80:810 82:770 88:780 92:790 96:840 98:910 100:920 101:880 104:890 105:1050 106:980 108:900 110:900 111:980 113:900 115:930 120:900 122:970 123:1040 124:950 128:910 133:890 134:1020 135:1080 136:1000 138:900 143:895' },
                    { name: '调用量', color: SALMON, max: 25, pins: [[76, 2, '2.0万'], [138, 21.6, '21.6万']], data: '0:13.5 2:12.7 3:13.3 4:14.5 5:19.8 6:13.5 8:12.4 10:12.8 11:12 12:11.1 14:12 15:14.7 16:11.5 18:11 21:11.5 26:12 30:12.3 34:13 42:13 46:12.3 48:11.5 49:11.2 50:13.5 51:18.7 52:15 53:12.5 55:9.5 58:6.5 62:4.4 66:3.2 70:2.5 76:2 79:2.4 82:3.6 85:5.4 87:7.5 90:10.5 93:13.4 95:14 98:13.9 100:15.7 101:16.2 103:16.5 104:18 105:21.3 107:19.2 109:17.5 110:17.3 111:19.5 112:19.6 113:17.5 116:17.6 117:18.7 119:16 121:14.2 122:15.1 124:14.3 126:13.8 128:13 131:12.4 133:11.8 134:14 135:18 136:15 137:14.8 138:21.6 139:15 140:13.6 142:13 143:12.2' }
                ]
            }
        };

        // redraw each chart whenever its panel changes width
        const observer = new ResizeObserver(entries => entries.forEach(e => draw(e.target.id, charts[e.target.id])));
        Object.keys(charts).forEach(id => {
            draw(id, charts[id]);
            observer.observe(document.getElementById(id));
        });
    </script>
</body>
</html>
